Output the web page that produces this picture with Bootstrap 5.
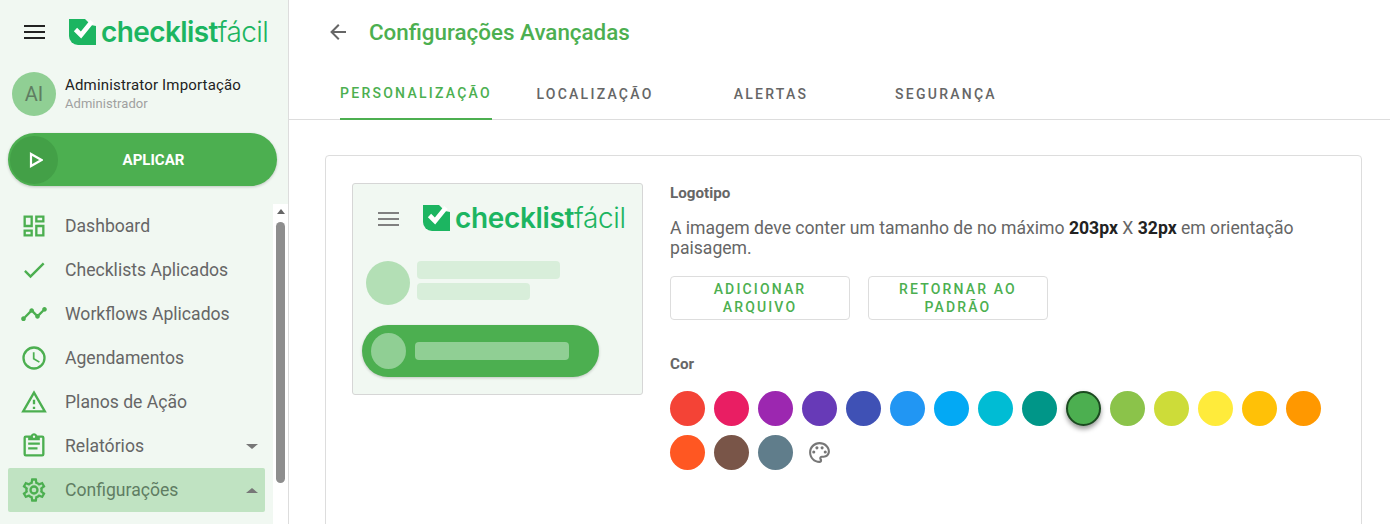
<!DOCTYPE html>
<html lang="pt-BR">
<head>
  <meta charset="UTF-8" />
  <title>Configurações Avançadas</title>
  <meta name="viewport" content="width=device-width, initial-scale=1" />
  <link href="https://cdn.jsdelivr.net/npm/bootstrap@5.3.0/dist/css/bootstrap.min.css" rel="stylesheet" />
  <style>
    html, body { height: 524px; overflow: hidden; }
    body { font-family: Roboto, sans-serif; background: #fff; color: #666; }
    .side { width: 289px; height: 524px; background: #f1f8f2; border-right: 1px solid #ddd; }
    .side-top { height: 64px; padding: 0 0 0 24px; }
    .burger { width: 21px; height: 14px; display: flex; flex-direction: column; justify-content: space-between; }
    .burger i { display: block; height: 2px; background: #222; }
    .logo { margin-left: 24px; margin-top: -1px; }
    .logo-word { font-family: Inter, sans-serif; font-size: 28px; line-height: 26px; color: #1cb561; letter-spacing: -.6px; margin-left: 5px; }
    .logo-word b { font-weight: 600; }
    .logo-word span { font-weight: 300; }
    .user-row { height: 44px; margin: 8px 0 0 12px; }
    .avatar { width: 44px; height: 44px; background: #90cf94; color: #5f7d62; font-size: 20px; }
    .user-info { margin-left: 1px; padding-top: 2px; }
    .user-name { font-size: 15px; line-height: 18px; color: #222; letter-spacing: .17px; }
    .user-role { font-size: 13px; line-height: 20px; color: #a0a0a0; letter-spacing: .05px; }
    .apply { width: 269px; height: 53px; margin: 17px 0 18px 8px; background: #4caf50; padding: 2px; box-shadow: 0 1px 3px rgba(0,0,0,.2); }
    .apply-dot { width: 48px; height: 48px; background: #43a047; }
    .apply-label { flex: 1; text-align: center; color: #fff; font-weight: 700; font-size: 15px; padding: 1px 26px 0 0; }
    .menu-wrap { height: 320px; }
    .menu { width: 273px; padding: 0 8px; }
    .menu-item { height: 44px; padding: 0 7px 0 12px; border-radius: 2px; font-size: 17.6px; color: #666; }
    .menu-item svg { width: 28px; height: 28px; fill: #4caf50; margin-right: 17px; flex: none; }
    .menu-item.on { background: #c0e3c2; color: #5f7d62; width: 257px; }
    .caret-d, .caret-u { width: 0; height: 0; border-left: 6px solid transparent; border-right: 6px solid transparent; margin-left: auto; }
    .caret-d { border-top: 5px solid #777; }
    .caret-u { border-bottom: 5px solid #777; }
    .sbar { width: 15px; background: #fff; padding-top: 5px; }
    .sbar-up { width: 0; height: 0; border-left: 4px solid transparent; border-right: 4px solid transparent; border-bottom: 5px solid #666; margin: 0 auto 8px; }
    .sbar-thumb { width: 9px; height: 261px; background: #8e8e8e; border-radius: 5px; margin: 0 auto; }
    .head { height: 64px; padding-left: 37px; }
    .head svg { width: 24px; height: 24px; fill: #666; margin-right: 19px; }
    .head h1 { font-size: 22.4px; font-weight: 500; color: #4caf50; margin: 0; }
    .tabbar { height: 56px; padding-left: 51px; border-bottom: 1px solid #ddd; }
    .tabbar .nav-link { width: 152px; height: 56px; padding: 5px 0 0; margin-right: 23px; display: flex; align-items: center; justify-content: center; font-size: 14px; font-weight: 500; letter-spacing: 2.25px; color: #666; white-space: nowrap; }
    .tabbar .nav-link:first-child { margin-right: 27px; }
    .tabbar .nav-link:nth-child(2) { margin-right: 24px; }
    .tabbar .nav-link.on { color: #4caf50; border-bottom: 2px solid #4caf50; }
    .panel { margin: 35px 28px 0 36px; height: 420px; border: 1px solid #ddd; border-radius: 4px; padding: 27px 26px; }
    .preview { width: 291px; height: 212px; background: #f1f8f2; border: 1px solid #d6d6d6; border-radius: 3px; flex: none; padding: 14px 0 0 13px; }
    .pv-top { height: 40px; padding-left: 12px; }
    .pv-top .burger { margin-top: 2px; }
    .pv-top .burger i { background: #808080; }
    .pv-top .logo-word { letter-spacing: -.35px; }
    .pv-user { margin-top: 23px; }
    .pv-av { width: 44px; height: 44px; background: #b3dfb5; margin-right: 7px; }
    .pv-b1 { width: 143px; height: 18px; background: #d8eeda; border-radius: 4px; margin-bottom: 4px; }
    .pv-b2 { width: 113px; height: 17px; background: #d8eeda; border-radius: 4px; }
    .pv-btn { width: 237px; height: 52px; margin: 20px 0 0 -4px; padding-left: 9px; background: #4caf50; box-shadow: 0 1px 3px rgba(0,0,0,.2); }
    .pv-dot { width: 35px; height: 36px; background: #90cf94; margin-right: 9px; }
    .pv-bar { width: 154px; height: 18px; background: #90cf94; border-radius: 4px; }
    .form-side { margin-left: 27px; }
    .lbl { font-size: 15.2px; font-weight: 700; color: #666; line-height: 18px; padding-top: 1px; }
    .lbl-cor { margin-top: 34px; }
    .hint { font-size: 17.6px; line-height: 20px; color: #666; margin: 16px 0 18px; width: 650px; }
    .hint b { color: #222; font-weight: 700; }
    .btn-row { gap: 18px; }
    .outline-btn { width: 180px; height: 44px; border: 1px solid #ddd; border-radius: 4px; background: #fff; color: #4caf50; font-size: 14px; font-weight: 500; letter-spacing: 2.15px; line-height: 18px; padding: 3px 24px 4px; text-transform: uppercase; }
    .swatches { width: 660px; margin-top: 18px; gap: 9px; }
    .sw { width: 35px; height: 35px; display: block; }
    .sw.picked { border: 2px solid #1b4a20; box-shadow: 0 3px 5px rgba(0,0,0,.4); }
    .pal { width: 35px; height: 35px; fill: #777; padding: 5px; }
  </style>
</head>
<body>
  <svg width="0" height="0" class="position-absolute">
    <symbol id="mark" viewBox="0 0 27 26">
      <path d="M0 0H27V26H9A9 9 0 0 1 0 17Z" fill="#1cb561" />
      <path d="M16 0H27V7L22 6Z" fill="#f1f8f2" />
      <path d="M6.5 10.5L12 16L23 2.5" fill="none" stroke="#fff" stroke-width="4.6" />
    </symbol>
  </svg>

  <div class="d-flex">
    <aside class="side flex-shrink-0">
      <div class="side-top d-flex align-items-center">
        <div class="burger"><i></i><i></i><i></i></div>
        <div class="logo d-flex align-items-center">
          <svg width="27" height="26"><use href="#mark" /></svg>
          <div class="logo-word"><b>checklist</b><span>fácil</span></div>
        </div>
      </div>
      <div class="user-row d-flex align-items-center">
        <div class="avatar rounded-circle d-flex align-items-center justify-content-center me-2">AI</div>
        <div class="user-info">
          <div class="user-name">Administrator Importação</div>
          <div class="user-role">Administrador</div>
        </div>
      </div>
      <div class="apply rounded-pill d-flex align-items-center">
        <div class="apply-dot rounded-circle d-flex align-items-center justify-content-center">
          <svg width="18" height="18" viewBox="0 0 18 18"><path d="M6 3L16.5 9L6 15Z" fill="none" stroke="#fff" stroke-width="2.2" /></svg>
        </div>
        <div class="apply-label">APLICAR</div>
      </div>
      <div class="menu-wrap d-flex">
        <nav class="menu flex-grow-1">
          <div class="menu-item d-flex align-items-center">
            <svg viewBox="0 0 24 24"><path d="M19,5V7H15V5H19M9,5V11H5V5H9M19,13V19H15V13H19M9,17V19H5V17H9M21,3H13V9H21V3M11,3H3V13H11V3M21,11H13V21H21V11M11,15H3V21H11V15Z" /></svg>
            <span>Dashboard</span>
          </div>
          <div class="menu-item d-flex align-items-center">
            <svg viewBox="0 0 24 24"><path d="M21,7L9,19L3.5,13.5L4.91,12.09L9,16.17L19.59,5.59L21,7Z" /></svg>
            <span>Checklists Aplicados</span>
          </div>
          <div class="menu-item d-flex align-items-center">
            <svg viewBox="0 0 24 24"><path d="M23 8c0 1.1-.9 2-2 2-.18 0-.35-.02-.51-.07l-3.56 3.55c.05.16.07.34.07.52 0 1.1-.9 2-2 2s-2-.9-2-2c0-.18.02-.36.07-.52l-2.55-2.55c-.16.05-.34.07-.52.07s-.36-.02-.52-.07l-4.55 4.56c.05.16.07.33.07.51 0 1.1-.9 2-2 2s-2-.9-2-2 .9-2 2-2c.18 0 .35.02.51.07l4.56-4.55C8.02 9.36 8 9.18 8 9c0-1.1.9-2 2-2s2 .9 2 2c0 .18-.02.36-.07.52l2.55 2.55c.16-.05.34-.07.52-.07s.36.02.52.07l3.55-3.56C19.02 8.35 19 8.18 19 8c0-1.1.9-2 2-2s2 .9 2 2z" /></svg>
            <span>Workflows Aplicados</span>
          </div>
          <div class="menu-item d-flex align-items-center">
            <svg viewBox="0 0 24 24"><path d="M12,20A8,8 0 0,0 20,12A8,8 0 0,0 12,4A8,8 0 0,0 4,12A8,8 0 0,0 12,20M12,2A10,10 0 0,1 22,12A10,10 0 0,1 12,22C6.47,22 2,17.5 2,12A10,10 0 0,1 12,2M12.5,7V12.25L17,14.92L16.25,16.15L11,13V7H12.5Z" /></svg>
            <span>Agendamentos</span>
          </div>
          <div class="menu-item d-flex align-items-center">
            <svg viewBox="0 0 24 24"><path d="M12,2L1,21H23M12,6L19.53,19H4.47M11,10V14H13V10M11,16V18H13V16" /></svg>
            <span>Planos de Ação</span>
          </div>
          <div class="menu-item d-flex align-items-center">
            <svg viewBox="0 0 24 24"><path d="M19,3H14.82C14.4,1.84 13.3,1 12,1C10.7,1 9.6,1.84 9.18,3H5A2,2 0 0,0 3,5V19A2,2 0 0,0 5,21H19A2,2 0 0,0 21,19V5A2,2 0 0,0 19,3M12,3A1,1 0 0,1 13,4A1,1 0 0,1 12,5A1,1 0 0,1 11,4A1,1 0 0,1 12,3M7,7H17V5H19V19H5V5H7V7M17,11H7V9H17V11M15,15H7V13H15V15Z" /></svg>
            <span>Relatórios</span>
            <span class="caret-d"></span>
          </div>
          <div class="menu-item on d-flex align-items-center">
            <svg viewBox="0 0 24 24"><path d="M12,8A4,4 0 0,1 16,12A4,4 0 0,1 12,16A4,4 0 0,1 8,12A4,4 0 0,1 12,8M12,10A2,2 0 0,0 10,12A2,2 0 0,0 12,14A2,2 0 0,0 14,12A2,2 0 0,0 12,10M10,22C9.75,22 9.54,21.82 9.5,21.58L9.13,18.93C8.5,18.68 7.96,18.34 7.44,17.94L4.95,18.95C4.73,19.03 4.46,18.95 4.34,18.73L2.34,15.27C2.21,15.05 2.27,14.78 2.46,14.63L4.57,12.97L4.5,12L4.57,11L2.46,9.37C2.27,9.22 2.21,8.95 2.34,8.73L4.34,5.27C4.46,5.05 4.73,4.96 4.95,5.05L7.44,6.05C7.96,5.66 8.5,5.32 9.13,5.07L9.5,2.42C9.54,2.18 9.75,2 10,2H14C14.25,2 14.46,2.18 14.5,2.42L14.87,5.07C15.5,5.32 16.04,5.66 16.56,6.05L19.05,5.05C19.27,4.96 19.54,5.05 19.66,5.27L21.66,8.73C21.79,8.95 21.73,9.22 21.54,9.37L19.43,11L19.5,12L19.43,13L21.54,14.63C21.73,14.78 21.79,15.05 21.66,15.27L19.66,18.73C19.54,18.95 19.27,19.04 19.05,18.95L16.56,17.95C16.04,18.34 15.5,18.68 14.87,18.93L14.5,21.58C14.46,21.82 14.25,22 14,22H10M11.25,4L10.88,6.61C9.68,6.86 8.62,7.5 7.85,8.39L5.44,7.35L4.69,8.65L6.8,10.2C6.4,11.37 6.4,12.64 6.8,13.8L4.68,15.36L5.43,16.66L7.86,15.62C8.63,16.5 9.68,17.14 10.87,17.38L11.24,20H12.76L13.13,17.39C14.32,17.14 15.37,16.5 16.14,15.62L18.57,16.66L19.32,15.36L17.2,13.81C17.6,12.64 17.6,11.37 17.2,10.2L19.31,8.65L18.56,7.35L16.15,8.39C15.38,7.5 14.32,6.86 13.12,6.62L12.75,4H11.25Z" /></svg>
            <span>Configurações</span>
            <span class="caret-u"></span>
          </div>
        </nav>
        <div class="sbar flex-shrink-0">
          <div class="sbar-up"></div>
          <div class="sbar-thumb"></div>
        </div>
      </div>
    </aside>

    <main class="flex-grow-1">
      <div class="head d-flex align-items-center">
        <svg viewBox="0 0 24 24"><path d="M20,11V13H8L13.5,18.5L12.08,19.92L4.16,12L12.08,4.08L13.5,5.5L8,11H20Z" /></svg>
        <h1>Configurações Avançadas</h1>
      </div>
      <div class="tabbar nav">
        <a class="nav-link on">PERSONALIZAÇÃO</a>
        <a class="nav-link">LOCALIZAÇÃO</a>
        <a class="nav-link">ALERTAS</a>
        <a class="nav-link">SEGURANÇA</a>
      </div>
      <div class="panel d-flex">
        <div class="preview">
          <div class="pv-top d-flex align-items-center">
            <div class="burger"><i></i><i></i><i></i></div>
            <div class="logo d-flex align-items-center">
              <svg width="27" height="26"><use href="#mark" /></svg>
              <div class="logo-word"><b>checklist</b><span>fácil</span></div>
            </div>
          </div>
          <div class="pv-user d-flex">
            <div class="pv-av rounded-circle"></div>
            <div>
              <div class="pv-b1"></div>
              <div class="pv-b2"></div>
            </div>
          </div>
          <div class="pv-btn rounded-pill d-flex align-items-center">
            <div class="pv-dot rounded-circle"></div>
            <div class="pv-bar"></div>
          </div>
        </div>
        <div class="form-side">
          <div class="lbl">Logotipo</div>
          <p class="hint"><span class="d-block">A imagem deve conter um tamanho de no máximo <b>203px</b> X <b>32px</b> em orientação</span><span class="d-block">paisagem.</span></p>
          <div class="btn-row d-flex">
            <button class="outline-btn">Adicionar arquivo</button>
            <button class="outline-btn">Retornar ao padrão</button>
          </div>
          <div class="lbl lbl-cor">Cor</div>
          <div class="swatches d-flex flex-wrap">
            <span class="sw rounded-circle" style="background:#f44336"></span>
            <span class="sw rounded-circle" style="background:#e91e63"></span>
            <span class="sw rounded-circle" style="background:#9c27b0"></span>
            <span class="sw rounded-circle" style="background:#673ab7"></span>
            <span class="sw rounded-circle" style="background:#3f51b5"></span>
            <span class="sw rounded-circle" style="background:#2196f3"></span>
            <span class="sw rounded-circle" style="background:#03a9f4"></span>
            <span class="sw rounded-circle" style="background:#00bcd4"></span>
            <span class="sw rounded-circle" style="background:#009688"></span>
            <span class="sw picked rounded-circle" style="background:#4caf50"></span>
            <span class="sw rounded-circle" style="background:#8bc34a"></span>
            <span class="sw rounded-circle" style="background:#cddc39"></span>
            <span class="sw rounded-circle" style="background:#ffeb3b"></span>
            <span class="sw rounded-circle" style="background:#ffc107"></span>
            <span class="sw rounded-circle" style="background:#ff9800"></span>
            <span class="sw rounded-circle" style="background:#ff5722"></span>
            <span class="sw rounded-circle" style="background:#795548"></span>
            <span class="sw rounded-circle" style="background:#607d8b"></span>
            <svg class="pal" viewBox="0 0 24 24"><path d="M12 22C6.49 22 2 17.51 2 12S6.49 2 12 2s10 4.04 10 9c0 3.31-2.69 6-6 6h-1.77c-.28 0-.5.22-.5.5 0 .12.05.23.13.33.41.47.64 1.06.64 1.67A2.5 2.5 0 0 1 12 22zm0-18c-4.41 0-8 3.59-8 8s3.59 8 8 8c.28 0 .5-.22.5-.5a.54.54 0 0 0-.14-.35c-.41-.46-.63-1.05-.63-1.65 0-1.38 1.12-2.5 2.5-2.5H16c2.21 0 4-1.79 4-4 0-3.86-3.59-7-8-7z" /><circle cx="6.5" cy="11.5" r="1.5" /><circle cx="9.5" cy="7.5" r="1.5" /><circle cx="14.5" cy="7.5" r="1.5" /><circle cx="17.5" cy="11.5" r="1.5" /></svg>
          </div>
        </div>
      </div>
    </main>
  </div>
  <script src="https://cdn.jsdelivr.net/npm/bootstrap@5.3.0/dist/js/bootstrap.bundle.min.js"></script>
</body>
</html>
